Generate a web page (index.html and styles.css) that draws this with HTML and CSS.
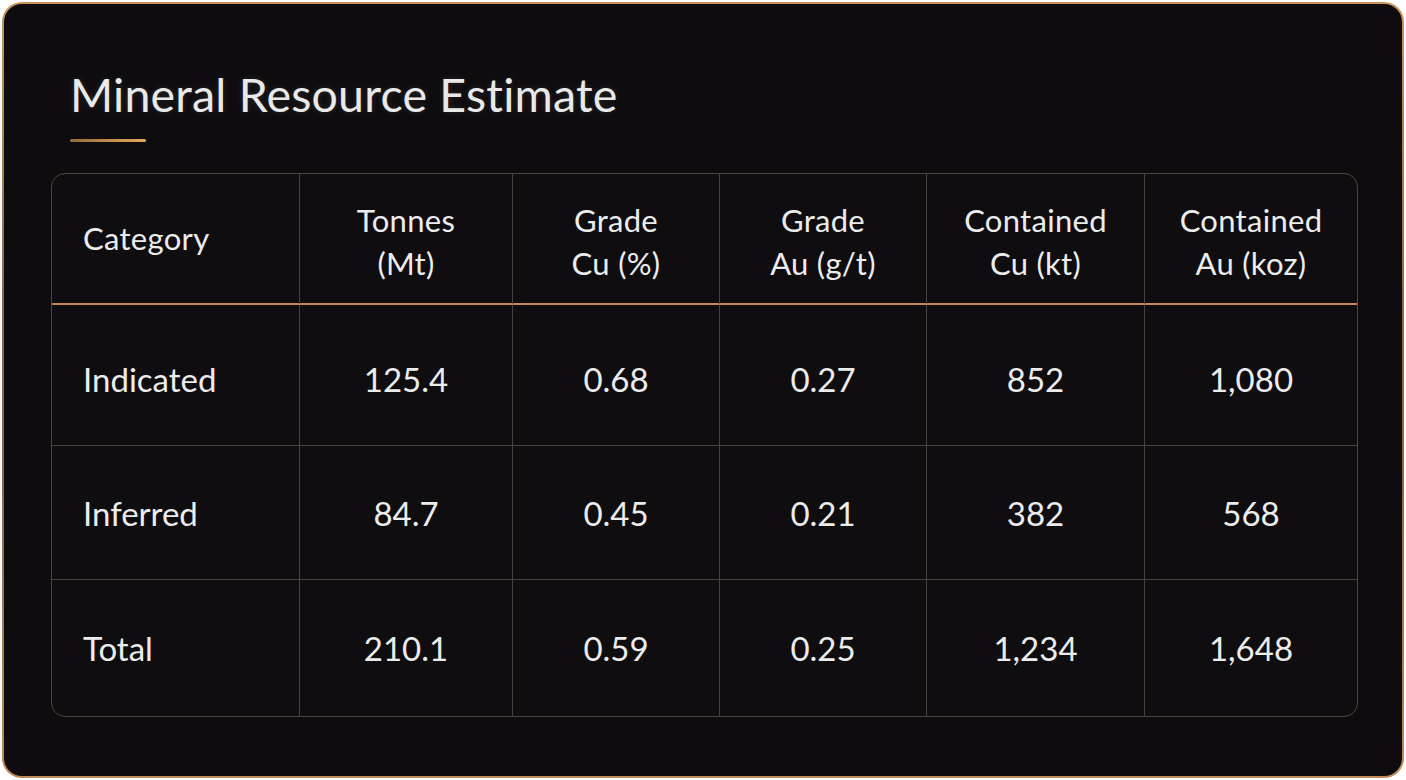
FILE: index.html
```html
<!DOCTYPE html>
<html lang="en">
<head>
<meta charset="utf-8">
<title>Mineral Resource Estimate</title>
<link rel="stylesheet" href="styles.css">
</head>
<body>
<div class="card">
  <header class="card-head">
    <h1 class="title">Mineral Resource Estimate</h1>
    <div class="accent"></div>
  </header>
  <div class="table-wrap">
    <table class="mre">
      <colgroup>
        <col class="c1"><col class="c2"><col class="c3"><col class="c4"><col class="c5"><col class="c6">
      </colgroup>
      <thead>
        <tr>
          <th class="cat">Category</th>
          <th>Tonnes<br>(Mt)</th>
          <th>Grade<br>Cu (%)</th>
          <th>Grade<br>Au (g/t)</th>
          <th>Contained<br>Cu (kt)</th>
          <th>Contained<br>Au (koz)</th>
        </tr>
      </thead>
      <tbody>
        <tr class="r1">
          <td class="cat">Indicated</td><td>125.4</td><td>0.68</td><td>0.27</td><td>852</td><td>1,080</td>
        </tr>
        <tr class="r2">
          <td class="cat">Inferred</td><td>84.7</td><td>0.45</td><td>0.21</td><td>382</td><td>568</td>
        </tr>
        <tr class="r3">
          <td class="cat">Total</td><td>210.1</td><td>0.59</td><td>0.25</td><td>1,234</td><td>1,648</td>
        </tr>
      </tbody>
    </table>
  </div>
</div>
</body>
</html>
```
FILE: styles.css
```css
* { box-sizing: border-box; }
html, body { margin: 0; padding: 0; }
body {
  background: #ffffff;
  padding: 2px;
  font-family: "Lato", "Noto Sans", sans-serif;
  color: #ededed;
}
.card {
  width: 1402px;
  height: 776px;
  border: 2px solid transparent;
  border-radius: 20px;
  background:
    linear-gradient(#0e0c0f, #0e0c0f) padding-box,
    linear-gradient(180deg, #c9935c 0%, #8e6844 40%, #8e6844 60%, #c08a58 100%) border-box;
  padding: 62px 47px 0 47px;
}
.card-head { padding-left: 19px; }
.title {
  margin: 0;
  font-size: 46.5px;
  line-height: 56px;
  font-weight: 400;
  color: #e9e9e9;
  letter-spacing: 0.2px;
  text-shadow: 0 0 6px rgba(255,255,255,0.12);
}
.accent {
  margin-top: 17px;
  width: 76px;
  height: 3px;
  border-radius: 2px;
  background: linear-gradient(90deg, #8f6b3c, #c8924f 60%, #e0a65e);
}
.table-wrap {
  margin-top: 31px;
  width: 1307px;
  border: 1.5px solid #4d4540;
  border-radius: 14px;
  overflow: hidden;
  background: #0f0d10;
}
.mre {
  width: 100%;
  table-layout: fixed;
  border-collapse: separate;
  border-spacing: 0;
}
.c1 { width: 248px; }
.c2 { width: 213px; }
.c3 { width: 207px; }
.c4 { width: 207px; }
.c5 { width: 218px; }
.c6 { width: auto; }
.mre th, .mre td {
  padding: 0;
  text-align: center;
  vertical-align: middle;
  border-right: 1.5px solid #4a423c;
  border-bottom: 1.5px solid #4a423c;
  color: #ececec;
}
.mre th:last-child, .mre td:last-child { border-right: none; }
.mre tbody tr:last-child td { border-bottom: none; }
.mre th {
  height: 131px;
  font-size: 31px;
  line-height: 43px;
  font-weight: 400;
  letter-spacing: 0.3px;
  border-bottom: 2px solid #c08a52;
  padding-top: 6px;
}
.mre td {
  font-size: 33px;
  line-height: 40px;
  font-weight: 400;
}
.mre .cat { text-align: left; padding-left: 31px; }
.mre th.cat { font-size: 31px; padding-top: 0; }
.r1 td { height: 141px; padding-top: 8px; }
.r2 td { height: 134px; }
.r3 td { height: 136px; }
```
